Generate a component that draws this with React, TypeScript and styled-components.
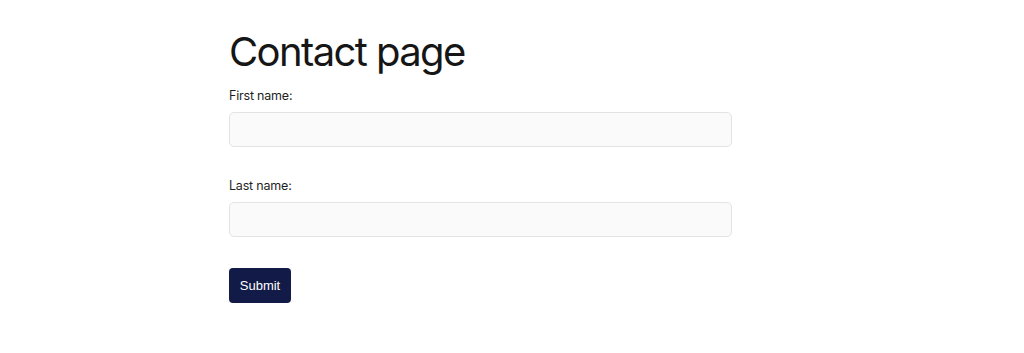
import styled, { createGlobalStyle } from 'styled-components'

const GlobalStyle = createGlobalStyle`
  * { box-sizing: border-box; }
  body {
    margin: 0;
    background: #ffffff;
    color: #161616;
    font-family: Inter, "Noto Sans", sans-serif;
  }
`

const Main = styled.main`
  width: 566px;
  margin: 0 auto;
  padding-top: 27px;
`

const Title = styled.h1`
  margin: 0 0 11px;
  font-size: 40px;
  font-weight: 400;
  line-height: 50px;
  letter-spacing: -1.6px;
  color: #161616;
`

const Form = styled.form`
  display: flex;
  flex-direction: column;
  width: 503px;
`

const Field = styled.div`
  display: flex;
  flex-direction: column;
  gap: 8px;
  margin-bottom: 31px;
`

const Label = styled.label`
  font-size: 12.5px;
  line-height: 16px;
  letter-spacing: -0.2px;
  color: #1e1e1e;
`

const Input = styled.input`
  height: 35px;
  width: 100%;
  border: 1px solid #e3e3e3;
  border-radius: 5px;
  background: #fafafa;
  padding: 0 10px;
  font-size: 14px;
  outline: none;
`

const Button = styled.button`
  align-self: flex-start;
  width: 62px;
  height: 35px;
  border: none;
  border-radius: 4px;
  background: #121a47;
  color: #ffffff;
  font-family: "Liberation Sans", Arial, sans-serif;
  font-size: 13px;
  cursor: pointer;
`

export default function App() {
  return (
    <>
      <GlobalStyle />
      <Main>
        <Title>Contact page</Title>
        <Form onSubmit={(e) => e.preventDefault()}>
          <Field>
            <Label htmlFor="first">First name:</Label>
            <Input id="first" type="text" />
          </Field>
          <Field>
            <Label htmlFor="last">Last name:</Label>
            <Input id="last" type="text" />
          </Field>
          <Button type="submit">Submit</Button>
        </Form>
      </Main>
    </>
  )
}
